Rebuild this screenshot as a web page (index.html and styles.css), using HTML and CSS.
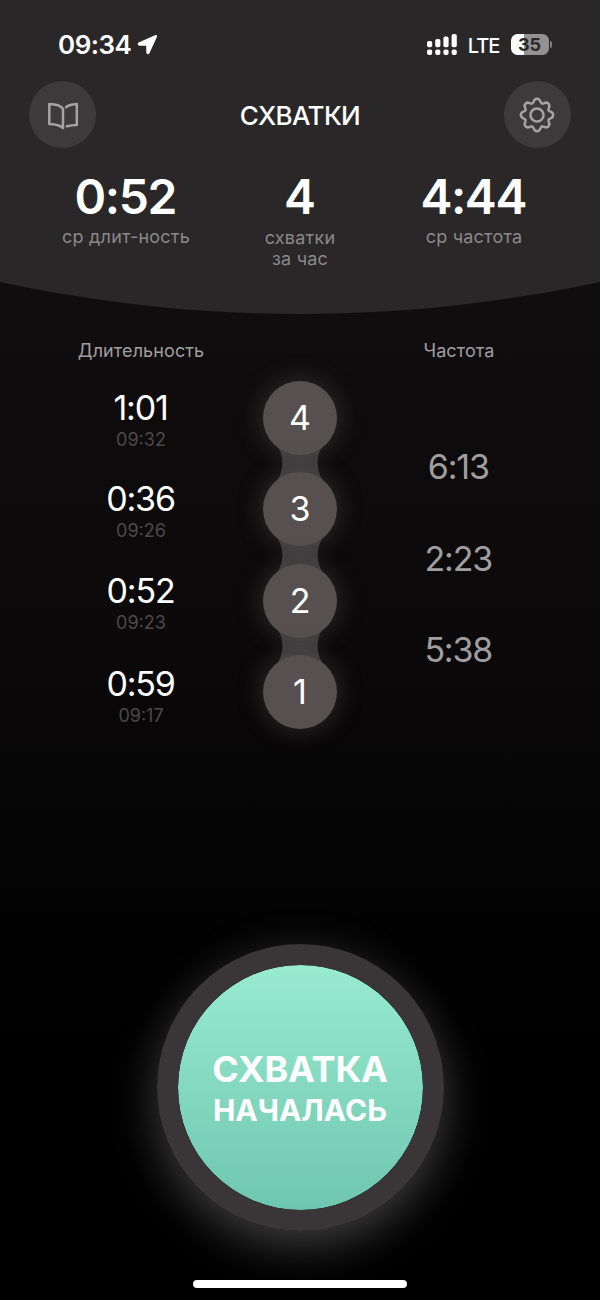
FILE: index.html
```html
<!DOCTYPE html>
<html lang="ru">
<head>
<meta charset="utf-8">
<meta name="viewport" content="width=600">
<title>Схватки</title>
<link rel="stylesheet" href="styles.css">
</head>
<body>
<div class="screen">
  <header class="header">
    <div class="status">
      <div class="status-left">
        <span class="clock">09:34</span>
        <svg class="location" width="21" height="21" viewBox="0 0 21 21"><path d="M1.6 8.6 18 1.2Q20.6.6 19.9 3L12.4 19.3Q10.6 21.4 9.3 18.8L9.2 11.8 2.1 11.7Q-.6 10.4 1.6 8.6Z" fill="#fff"/></svg>
      </div>
      <div class="status-right">
        <svg width="30" height="22" viewBox="0 0 30 22" fill="#fff">
          <rect x="0" y="7" width="5.2" height="6.3" rx="1.8"/><rect x="8.2" y="5" width="5.2" height="8.3" rx="1.8"/><rect x="16.4" y="2.6" width="5.2" height="10.7" rx="1.8"/><rect x="24.6" y="0" width="5.2" height="13.3" rx="1.8"/>
          <rect x="0" y="15.6" width="5.2" height="5.4" rx="1.9"/><rect x="8.2" y="15.6" width="5.2" height="5.4" rx="1.9"/><rect x="16.4" y="15.6" width="5.2" height="5.4" rx="1.9"/><rect x="24.6" y="15.6" width="5.2" height="5.4" rx="1.9"/>
        </svg>
        <span class="network">LTE</span>
        <div class="battery"><span class="battery-body">35</span><span class="battery-tip"></span></div>
      </div>
    </div>
    <div class="toolbar">
      <button class="round-button" aria-label="Справка">
        <svg width="34" height="34" viewBox="0 0 34 34" fill="none" stroke="#a5a3a4" stroke-width="2.5" stroke-linecap="round" stroke-linejoin="round"><path d="M17 30V11Q14.3 6.4 3.3 6V26Q13 26.4 17 30M20 9.2Q23.5 6.4 30.8 6V27Q26.2 27.1 20.8 28.3" /></svg>
      </button>
      <h1 class="title">СХВАТКИ</h1>
      <button class="round-button" aria-label="Настройки">
        <svg width="38" height="38" viewBox="0 0 38 38" fill="none" stroke="#a5a3a4" stroke-width="2.5" stroke-linejoin="round"><circle cx="19" cy="19" r="6.5"/><path d="M15.7 5.4C17 2 21 2 22.3 5.4C23.2 7.7 24.2 8.1 26.3 7.1C29.6 5.6 32.4 8.4 30.9 11.7C29.9 13.8 30.3 14.8 32.6 15.7C36 17 36 21 32.6 22.3C30.3 23.2 29.9 24.2 30.9 26.3C32.4 29.6 29.6 32.4 26.3 30.9C24.2 29.9 23.2 30.3 22.3 32.6C21 36 17 36 15.7 32.6C14.8 30.3 13.8 29.9 11.7 30.9C8.4 32.4 5.6 29.6 7.1 26.3C8.1 24.2 7.7 23.2 5.4 22.3C2 21 2 17 5.4 15.7C7.7 14.8 8.1 13.8 7.1 11.7C5.6 8.4 8.4 5.6 11.7 7.1C13.8 8.1 14.8 7.7 15.7 5.4Z"/></svg>
      </button>
    </div>
    <div class="stats">
      <div class="stat"><span class="stat-value">0:52</span><span class="stat-label">ср длит-ность</span></div>
      <div class="stat"><span class="stat-value">4</span><span class="stat-label stat-label-tall">схватки<br>за час</span></div>
      <div class="stat"><span class="stat-value">4:44</span><span class="stat-label">ср частота</span></div>
    </div>
  </header>

  <main class="log">
    <section class="column">
      <h2 class="column-title">Длительность</h2>
      <div class="entry"><span class="duration">1:01</span><span class="started">09:32</span></div>
      <div class="entry"><span class="duration">0:36</span><span class="started">09:26</span></div>
      <div class="entry"><span class="duration">0:52</span><span class="started">09:23</span></div>
      <div class="entry"><span class="duration">0:59</span><span class="started">09:17</span></div>
    </section>
    <section class="rail">
      <span class="node">4</span>
      <svg class="link" width="56" height="38" viewBox="0 0 56 38"><path d="M4 0C8 5 10.3 12 10.3 19C10.3 26 8 33 4 38H52C48 33 45.7 26 45.7 19C45.7 12 48 5 52 0Z"/></svg>
      <span class="node">3</span>
      <svg class="link" width="56" height="38" viewBox="0 0 56 38"><path d="M4 0C8 5 10.3 12 10.3 19C10.3 26 8 33 4 38H52C48 33 45.7 26 45.7 19C45.7 12 48 5 52 0Z"/></svg>
      <span class="node">2</span>
      <svg class="link" width="56" height="38" viewBox="0 0 56 38"><path d="M4 0C8 5 10.3 12 10.3 19C10.3 26 8 33 4 38H52C48 33 45.7 26 45.7 19C45.7 12 48 5 52 0Z"/></svg>
      <span class="node">1</span>
    </section>
    <section class="column">
      <h2 class="column-title">Частота</h2>
      <div class="intervals">
        <span class="interval">6:13</span>
        <span class="interval">2:23</span>
        <span class="interval">5:38</span>
      </div>
    </section>
  </main>

  <footer class="footer">
    <button class="start"><span class="start-main">СХВАТКА</span><span class="start-sub">НАЧАЛАСЬ</span></button>
    <div class="home-bar"></div>
  </footer>
</div>
</body>
</html>
```
FILE: styles.css
```css
* { box-sizing: border-box; }
body { margin: 0; background: #000; font-family: Inter, "Liberation Sans", sans-serif; color: #fff; }
h1, h2 { margin: 0; font-weight: 400; }
button { border: 0; padding: 0; font: inherit; color: inherit; }
svg { display: block; flex: none; }

.screen {
  width: 600px; height: 1300px; overflow: hidden;
  display: flex; flex-direction: column;
  background: linear-gradient(#0f0d0e 0, #0f0d0e 300px, #0b090a 620px, #000 1040px);
}

.header {
  height: 314px; flex: none; background: #292728;
  clip-path: circle(1422px at 50% calc(100% - 1422px));
}
.status { height: 81px; padding: 8px 48px 0 58px; display: flex; justify-content: space-between; align-items: center; }
.status-left, .status-right { display: flex; align-items: center; }
.status-left { gap: 6px; }
.clock { font-size: 26px; font-weight: 600; line-height: 30px; letter-spacing: -0.5px; }
.network { font-size: 20px; font-weight: 500; line-height: 24px; margin: 2px 11px 0 11px; letter-spacing: -0.9px; }
.battery { display: flex; align-items: center; gap: 1px; }
.battery-body {
  width: 38px; height: 21px; border-radius: 6.5px; text-align: center;
  font-size: 18px; line-height: 21px; font-weight: 700; color: #292728;
  background: linear-gradient(90deg, #fff 13px, #939192 13px);
}
.battery-tip { width: 2.5px; height: 7px; border-radius: 0 3px 3px 0; background: #817f80; }

.toolbar { height: 67px; padding: 0 29px; display: flex; align-items: center; justify-content: space-between; }
.round-button { width: 67px; height: 67px; border-radius: 50%; background: #3c3a3b; display: flex; align-items: center; justify-content: center; }
.title { font-size: 26px; line-height: 32px; font-weight: 500; letter-spacing: -0.65px; padding-top: 3px; }

.stats { display: grid; grid-template-columns: repeat(3, 174px); justify-content: center; padding-top: 20px; }
.stat { display: flex; flex-direction: column; align-items: center; text-align: center; }
.stat-value { font-size: 48px; line-height: 58px; font-weight: 600; letter-spacing: -1.4px; padding-right: 1.6px; }
.stat-label { font-size: 18px; line-height: 21px; color: #8a8889; letter-spacing: 0.22px; }
.stat-label-tall { padding-top: 1px; }

.log { height: 427px; flex: none; display: grid; grid-template-columns: repeat(3, 159px); justify-content: center; }
.column { display: flex; flex-direction: column; align-items: center; padding-top: 26px; }
.column-title { font-size: 18px; line-height: 22px; color: #a09e9f; letter-spacing: 0.1px; }
.entry { height: 91.5px; display: flex; flex-direction: column; align-items: center; }
.column-title + .entry { margin-top: 24.5px; }
.entry:last-child { margin-top: 1.5px; }
.duration { font-size: 34px; line-height: 42px; letter-spacing: -1.2px; padding-right: 1px; }
.started { font-size: 18px; line-height: 22px; color: #4c494a; }
.intervals { display: flex; flex-direction: column; align-items: center; padding-top: 59px; }
.interval { height: 91.5px; font-size: 34px; line-height: 92px; color: #a09e9f; letter-spacing: -1.2px; padding-right: 1.5px; }

.rail { display: flex; flex-direction: column; align-items: center; padding-top: 66.5px; overflow: hidden; isolation: isolate; }
.node {
  flex: none; width: 74px; height: 74px; border-radius: 50%; background: #565050;
  font-size: 34px; line-height: 74px; text-align: center; position: relative; z-index: 1;
  box-shadow: 0 0 26px rgba(100, 93, 93, 0.48);
}
.link { margin: -10.2px 0 -10.3px; fill: #3c3a3b; position: relative; z-index: 0; }

.footer { flex: 1; display: flex; flex-direction: column; align-items: center; padding-top: 203px; }
.start {
  width: 287px; height: 287px; border-radius: 50%; border: 21.5px solid #3a3637; flex: none;
  background: linear-gradient(#98ebcf, #6fc6b0) padding-box;
  box-shadow: 0 14px 46px rgba(150, 150, 150, 0.42);
  display: flex; flex-direction: column; align-items: center; justify-content: center;
}
.start-main { font-size: 36px; line-height: 44px; font-weight: 700; letter-spacing: -0.2px; }
.start-sub { font-size: 30px; line-height: 38px; font-weight: 700; }
.home-bar { width: 214px; height: 7.5px; border-radius: 4px; background: #fff; margin-top: 49px; flex: none; }
```
